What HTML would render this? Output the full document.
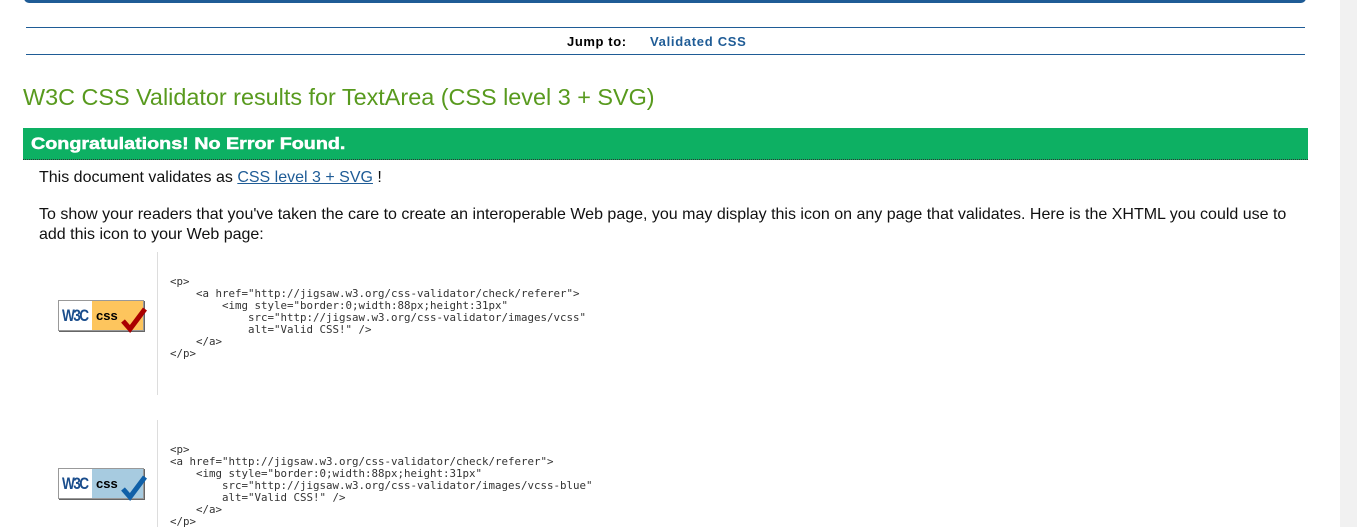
<!DOCTYPE html>
<html><head><meta charset="utf-8"><style>
body{margin:0;width:1357px;height:527px;overflow:hidden;background:#fff;font-family:"Liberation Sans",Arial,sans-serif;position:relative}
.a{position:absolute}
pre{margin:0;font-family:"DejaVu Sans Mono","Liberation Mono",monospace;font-size:10.8px;line-height:12px;color:#333}
.badge{position:absolute;width:84px;height:29px;border:1px solid #999;box-shadow:1px 1px 0 #666;background:#fff}
.badge .r{position:absolute;left:33px;top:0;width:51px;height:29px}
.badge .w{position:absolute;left:3px;top:5px;font:bold 17px "Liberation Sans",sans-serif;color:#1a4d8c;letter-spacing:-2px;transform:scaleX(.8);transform-origin:left}
.badge .c{position:absolute;left:37px;top:7px;font:bold 13px "Liberation Sans",sans-serif;color:#000}
</style></head><body>
<div class="a" style="left:24px;top:-6px;width:1282px;height:9px;background:#1f5c96;border-radius:0 0 5px 5px"></div>
<div class="a" style="left:1340px;top:0;width:17px;height:527px;background:#f1f1f1"></div>
<div class="a" style="left:26px;top:27px;width:1279px;height:1px;background:#1f5c96"></div>
<div class="a" style="left:26px;top:54px;width:1279px;height:1px;background:#1f5c96"></div>
<div class="a" style="left:567px;top:34px;font-size:13px;font-weight:bold;color:#000;letter-spacing:.6px">Jump to:</div>
<div class="a" style="left:650px;top:34px;font-size:13px;font-weight:bold;color:#1f5c96;letter-spacing:.7px">Validated CSS</div>
<div class="a" style="left:23px;top:84px;font-size:23.4px;color:#589a1e">W3C CSS Validator results for TextArea (CSS level 3 + SVG)</div>
<div class="a" style="left:23px;top:128px;width:1285px;height:31px;background:#0db063;border-bottom:1px dotted #333"></div>
<div class="a" style="left:31px;top:134px;font-size:17px;font-weight:bold;color:#fff;transform:scaleX(1.16);transform-origin:left;-webkit-text-stroke:.5px #fff">Congratulations! No Error Found.</div>
<div class="a" style="left:39px;top:169px;font-size:16px;color:#111">This document validates as <span style="color:#1f5c96;text-decoration:underline">CSS level 3 + SVG</span> !</div>
<div class="a" style="left:39px;top:205px;width:1260px;font-size:16px;line-height:20px;color:#111">To show your readers that you've taken the care to create an interoperable Web page, you may display this icon on any page that validates. Here is the XHTML you could use to add this icon to your Web page:</div>
<div class="badge" style="left:58px;top:300px"><div class="r" style="background:#fdc55d"></div><div class="w">W3C</div><div class="c">css</div><svg class="a" style="left:62px;top:3px;overflow:visible" width="28" height="30"><path d="M2 17l7 8L24 5" stroke="#a00" stroke-width="5" fill="none"/></svg></div>
<div class="a" style="left:157px;top:252px;width:1px;height:143px;background:#ddd"></div>
<pre class="a" style="left:170px;top:276px">&lt;p&gt;
    &lt;a href="http://jigsaw.w3.org/css-validator/check/referer"&gt;
        &lt;img style="border:0;width:88px;height:31px"
            src="http://jigsaw.w3.org/css-validator/images/vcss"
            alt="Valid CSS!" /&gt;
    &lt;/a&gt;
&lt;/p&gt;</pre>
<div class="badge" style="left:58px;top:468px"><div class="r" style="background:#a7cbe0"></div><div class="w">W3C</div><div class="c">css</div><svg class="a" style="left:62px;top:3px;overflow:visible" width="28" height="30"><path d="M2 17l7 8L24 5" stroke="#1060a8" stroke-width="5" fill="none"/></svg></div>
<div class="a" style="left:157px;top:420px;width:1px;height:107px;background:#ddd"></div>
<pre class="a" style="left:170px;top:444px">&lt;p&gt;
&lt;a href="http://jigsaw.w3.org/css-validator/check/referer"&gt;
    &lt;img style="border:0;width:88px;height:31px"
        src="http://jigsaw.w3.org/css-validator/images/vcss-blue"
        alt="Valid CSS!" /&gt;
    &lt;/a&gt;
&lt;/p&gt;</pre>
</body></html>
